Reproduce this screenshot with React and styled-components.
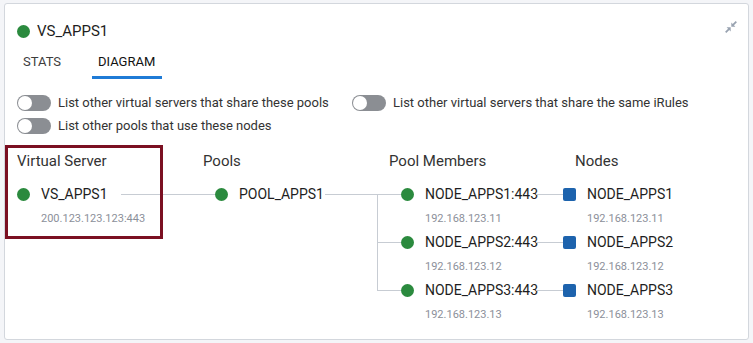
import React from 'react';
import styled, { createGlobalStyle } from 'styled-components';

const COLORS = {
    page: '#f4f5f8',
    border: '#d3d7dd',
    text: '#333333',
    dark: '#1e1e22',
    muted: '#8c909a',
    green: '#2b8a3e',
    blue: '#1d63ad',
    tab: '#1f7bd6',
    toggle: '#8b8e93',
    line: '#c7ccd3',
    highlight: '#7b1022',
    icon: '#98a2b0',
};

const GlobalStyle = createGlobalStyle`
    html, body {
        margin: 0;
        padding: 0;
        background: ${COLORS.page};
        font-family: Roboto, "Liberation Sans", Arial, sans-serif;
        color: ${COLORS.text};
    }
    * { box-sizing: border-box; }
`;

const TOGGLES = [
    'List other virtual servers that share these pools',
    'List other virtual servers that share the same iRules',
    'List other pools that use these nodes',
];

const HEADERS = ['Virtual Server', 'Pools', 'Pool Members', 'Nodes'];

const MEMBERS = [
    { member: 'NODE_APPS1:443', node: 'NODE_APPS1', ip: '192.168.123.11' },
    { member: 'NODE_APPS2:443', node: 'NODE_APPS2', ip: '192.168.123.12' },
    { member: 'NODE_APPS3:443', node: 'NODE_APPS3', ip: '192.168.123.13' },
];

// small diagonal "compress" arrows in the card corner
const CompressIcon = () => (
    <svg width="12" height="12" viewBox="0 0 12 12">
        <path d="M11.3 0.7 L7.8 4.2" stroke={COLORS.icon} strokeWidth="1.8" />
        <path d="M6.3 5.7 L6.3 1.6 L10.4 5.7 Z" fill={COLORS.icon} />
        <path d="M0.7 11.3 L4.2 7.8" stroke={COLORS.icon} strokeWidth="1.8" />
        <path d="M5.7 6.3 L5.7 10.4 L1.6 6.3 Z" fill={COLORS.icon} />
    </svg>
);

const Node = ({ name, ip, shape = 'round', color = COLORS.green }) => (
    <NodeCell>
        <NodeTop>
            <Marker $shape={shape} $color={color} />
            <NodeName>{name}</NodeName>
        </NodeTop>
        {ip && <NodeIp>{ip}</NodeIp>}
    </NodeCell>
);

const App = () => {
    return (
        <Page>
            <GlobalStyle />
            <Card>
                <TitleRow>
                    <Title>
                        <Marker $shape="round" $color={COLORS.green} />
                        VS_APPS1
                    </Title>
                    <IconButton aria-label="collapse">
                        <CompressIcon />
                    </IconButton>
                </TitleRow>

                <Tabs>
                    <Tab>STATS</Tab>
                    <Tab $active>DIAGRAM</Tab>
                </Tabs>

                <ToggleGrid>
                    {TOGGLES.map(label => (
                        <ToggleRow key={label}>
                            <Switch role="switch" aria-checked="false">
                                <Knob />
                            </Switch>
                            {label}
                        </ToggleRow>
                    ))}
                </ToggleGrid>

                <Diagram>
                    <Highlight />
                    <HeaderRow>
                        {HEADERS.map(h => (
                            <ColumnHeader key={h}>{h}</ColumnHeader>
                        ))}
                    </HeaderRow>
                    <Graph>
                        {MEMBERS.map((m, i) => (
                            <React.Fragment key={m.member}>
                                {i === 0 ? (
                                    <>
                                        <Node name="VS_APPS1" ip="200.123.123.123:443" />
                                        <Connector />
                                        <Node name="POOL_APPS1" />
                                    </>
                                ) : (
                                    <Spacer $span={3} />
                                )}
                                <Branch $pos={i === 0 ? 'first' : i === MEMBERS.length - 1 ? 'last' : 'mid'} />
                                <Node name={m.member} ip={m.ip} />
                                <Connector />
                                <Node name={m.node} ip={m.ip} shape="square" color={COLORS.blue} />
                            </React.Fragment>
                        ))}
                    </Graph>
                </Diagram>
            </Card>
        </Page>
    );
};

const Page = styled.div`
    padding: 3px 4px 4px 4px;
    width: 753px;
    height: 343px;
`;

const Card = styled.div`
    width: 745px;
    height: 337px;
    background: #ffffff;
    border: 1px solid ${COLORS.border};
    border-radius: 3px;
    padding: 17px 11px 0 12px;
`;

const TitleRow = styled.div`
    display: flex;
    justify-content: space-between;
    align-items: flex-start;
`;

const Title = styled.div`
    display: flex;
    align-items: center;
    gap: 7px;
    font-size: 15px;
    line-height: 20px;
    color: ${COLORS.dark};
`;

const IconButton = styled.div`
    display: flex;
`;

const Tabs = styled.div`
    display: flex;
    gap: 24px;
    margin-top: 13px;
`;

const Tab = styled.div`
    padding: 0 7px 6px 6px;
    font-size: 13px;
    line-height: 16px;
    color: ${p => (p.$active ? '#111111' : '#3d3d3d')};
    border-bottom: 3px solid ${p => (p.$active ? COLORS.tab : 'transparent')};
`;

const ToggleGrid = styled.div`
    display: grid;
    grid-template-columns: 335px auto;
    row-gap: 7px;
    margin-top: 16px;
`;

const ToggleRow = styled.label`
    display: flex;
    align-items: center;
    gap: 7px;
    font-size: 13px;
    line-height: 16px;
    color: ${COLORS.text};
`;

const Switch = styled.span`
    position: relative;
    display: inline-block;
    width: 34px;
    height: 16px;
    border-radius: 8px;
    background: ${COLORS.toggle};
    flex-shrink: 0;
`;

const Knob = styled.span`
    position: absolute;
    top: 1px;
    left: 1px;
    width: 14px;
    height: 14px;
    border-radius: 50%;
    background: #ffffff;
`;

const Diagram = styled.div`
    position: relative;
    margin-top: 18px;
`;

const Highlight = styled.div`
    position: absolute;
    top: -7px;
    left: -12px;
    width: 158px;
    height: 94px;
    border: 3px solid ${COLORS.highlight};
    pointer-events: none;
    z-index: 1;
`;

const HeaderRow = styled.div`
    display: grid;
    grid-template-columns: 186px 186px 186px 1fr;
`;

const ColumnHeader = styled.div`
    font-size: 15px;
    line-height: 18px;
    color: ${COLORS.text};
`;

const Graph = styled.div`
    display: grid;
    grid-template-columns: 104px 94px 110px 76px 135px 27px 1fr;
    grid-auto-rows: 48px;
    margin-top: 14px;
`;

const Spacer = styled.div`
    grid-column: span ${p => p.$span};
`;

const NodeCell = styled.div`
    display: flex;
    flex-direction: column;
`;

const NodeTop = styled.div`
    display: flex;
    align-items: center;
    gap: 11px;
    height: 20px;
`;

const Marker = styled.span`
    display: inline-block;
    width: 13px;
    height: 13px;
    flex-shrink: 0;
    border-radius: ${p => (p.$shape === 'square' ? '2px' : '50%')};
    background: ${p => p.$color};
`;

const NodeName = styled.span`
    font-size: 14px;
    line-height: 20px;
    color: ${COLORS.dark};
    white-space: nowrap;
`;

const NodeIp = styled.div`
    margin-top: 8px;
    padding-left: 24px;
    font-size: 11px;
    line-height: 14px;
    color: ${COLORS.muted};
    white-space: nowrap;
`;

const Connector = styled.div`
    position: relative;
    &::before {
        content: '';
        position: absolute;
        top: 10px;
        left: 0;
        right: 0;
        height: 1px;
        background: ${COLORS.line};
    }
`;

const Branch = styled.div`
    position: relative;
    &::before {
        content: '';
        position: absolute;
        top: 10px;
        left: ${p => (p.$pos === 'first' ? '0' : '52px')};
        right: 0;
        height: 1px;
        background: ${COLORS.line};
    }
    &::after {
        content: '';
        position: absolute;
        left: 52px;
        width: 1px;
        top: ${p => (p.$pos === 'first' ? '10px' : '0')};
        bottom: ${p => (p.$pos === 'last' ? '37px' : '0')};
        background: ${COLORS.line};
    }
`;

export default App;
